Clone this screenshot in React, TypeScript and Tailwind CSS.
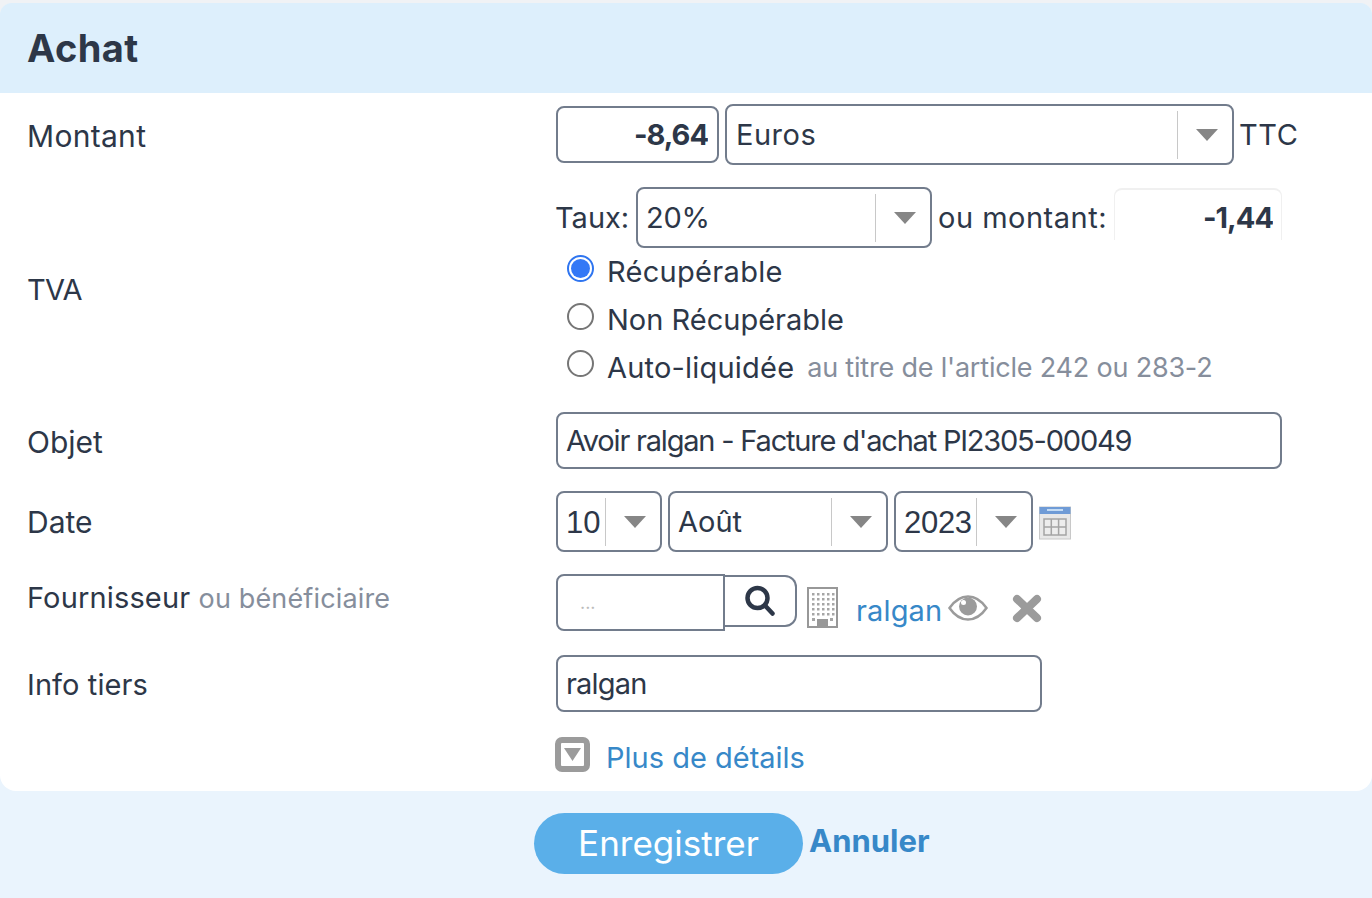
import React from 'react';

const Arrow = () => (
  <svg width="22" height="12" viewBox="0 0 22 12" className="shrink-0">
    <path d="M0 0h22L11 12z" fill="#868686" />
  </svg>
);

interface SelectProps {
  value: string;
  className: string;
  arial?: boolean;
  spanClass?: string;
}

const Select: React.FC<SelectProps> = ({ value, className, arial, spanClass }) => (
  <div className={`flex items-center border-2 border-[#727c8c] rounded-lg bg-white shrink-0 pl-[8px] ${className}`}>
    <span className={`flex-1 ${arial ? "font-['Liberation_Sans',sans-serif] text-[31px] pt-1" : ''} ${spanClass ?? ''}`}>{value}</span>
    <div className="w-[1.5px] h-[48px] bg-[#c8c8c8]" />
    <div className="flex justify-center items-center w-[54px] pl-[4px]">
      <Arrow />
    </div>
  </div>
);

const Radio = ({ checked }: { checked?: boolean }) =>
  checked ? (
    <div className="w-[27px] h-[27px] rounded-full border-2 border-[#2f75f0] bg-white flex items-center justify-center shrink-0">
      <div className="w-[19px] h-[19px] rounded-full bg-[#3478f6]" />
    </div>
  ) : (
    <div className="w-[27px] h-[27px] rounded-full border-2 border-[#767676] bg-white shrink-0" />
  );

const Calendar = () => (
  <svg width="33" height="34" viewBox="0 0 33 34" className="shrink-0">
    <rect x="0.5" y="1" width="31" height="32" fill="#e8e8e8" stroke="#c8c8c8" />
    <rect x="0.5" y="1" width="31" height="7" fill="#6f9bd6" />
    <rect x="8" y="3" width="16" height="2" fill="#c4dcf5" />
    <rect x="5" y="13" width="22" height="16" fill="#ededed" stroke="#a4a4a4" strokeWidth="1.500" />
    <path d="M12.300 13v16M19.600 13v16M5 21h22" stroke="#a4a4a4" strokeWidth="1.500" />
  </svg>
);

const Building = () => (
  <svg width="31" height="41" viewBox="0 0 31 41" className="shrink-0">
    <rect x="1" y="1" width="29" height="39" fill="#fff" stroke="#989898" strokeWidth="2" />
    {[6, 11, 16, 21, 26].map((y) =>
      [5, 10, 15, 20, 25].map((x) => <rect key={`${x}-${y}`} x={x} y={y} width="2.500" height="2.500" fill="#a6a6a6" />),
    )}
    <rect x="5" y="31" width="3" height="3" fill="#a6a6a6" />
    <rect x="23" y="31" width="3" height="3" fill="#a6a6a6" />
    <path d="M10 32h11v8H10z" fill="#989898" />
  </svg>
);

const Eye = () => (
  <svg width="40" height="28" viewBox="0 0 40 28" className="shrink-0">
    <path d="M1.500 14C7 6 13 2.500 20 2.500S33 6 38.500 14C33 22 27 25.500 20 25.500S7 22 1.500 14z" fill="none" stroke="#9b9b9b" strokeWidth="2.500" />
    <circle cx="20" cy="12.500" r="9" fill="#9b9b9b" />
    <circle cx="15.500" cy="8.500" r="2.500" fill="#fff" />
  </svg>
);

const Cross = () => (
  <svg width="30" height="29" viewBox="0 0 30 29" className="shrink-0">
    <path d="M5 5l20 19M25 5L5 24" stroke="#9b9b9b" strokeWidth="8" strokeLinecap="round" />
  </svg>
);

const Search = () => (
  <svg width="32" height="32" viewBox="0 0 32 32">
    <circle cx="13.500" cy="13" r="10" fill="none" stroke="#2d3748" strokeWidth="4.500" />
    <path d="M21 20.500l7.500 8" stroke="#2d3748" strokeWidth="4.500" strokeLinecap="round" />
  </svg>
);

const inputClass = 'border-2 border-[#727c8c] rounded-lg bg-white outline-none px-[8px] text-[#2d3748]';

export default function App() {
  return (
    <div className="w-[1372px] h-[898px] overflow-hidden bg-[#f0f2f5] pt-[3px] font-['Inter',sans-serif] text-[29px] text-[#2d3748]">
      <div className="h-[895px] bg-[#eaf4fd] rounded-t-xl flex flex-col">
        <div className="h-[90px] bg-[#ddeffc] rounded-t-xl flex items-center pl-[27px]">
          <h1 className="text-[38px] font-bold pt-px tracking-[0.4px]">Achat</h1>
        </div>

        <div className="h-[698px] bg-white rounded-b-2xl flex flex-col">
          {/* Montant */}
          <div className="flex h-[94px] pt-[11px]">
            <div className="w-[556px] pl-[27px] pt-[10px] shrink-0 text-[30px] tracking-[0.3px]">Montant</div>
            <div className="flex gap-[6px]">
              <input readOnly value="-8,64" className={`${inputClass} w-[163px] h-[57px] mt-[2px] text-right font-bold tracking-[-1px] pr-[9px]`} />
              <Select value="Euros" className="w-[509px] h-[61px]" spanClass="tracking-[0.5px] pl-px" />
              <span className="pt-[9px] -ml-px tracking-[0.6px]">TTC</span>
            </div>
          </div>

          {/* TVA */}
          <div className="flex h-[225px]">
            <div className="w-[556px] pl-[27px] pt-[81px] shrink-0 tracking-[-0.6px]">TVA</div>
            <div className="flex flex-col">
              <div className="flex items-start h-[61px]">
                <span className="pt-[9px] w-[80px] -ml-px mr-px">Taux:</span>
                <Select value="20%" className="w-[296px] h-[61px]" spanClass="tracking-[-0.3px]" />
                <span className="pt-[9px] pl-[6px] w-[182px] tracking-[0.5px]">ou montant:</span>
                <input
                  readOnly
                  value="-1,44"
                  className="w-[168px] h-[52px] mt-px pt-[4px] border-t-2 border-x border-[#f0f0f0] rounded-t-lg px-[8px] text-right font-bold outline-none tracking-[-1px]"
                />
              </div>
              <div className="flex flex-col pl-[11px] pt-[6px] gap-[12px]">
                <div className="flex items-center gap-[14px] h-[36px]">
                  <div className="mb-[8px]">
                    <Radio checked />
                  </div>
                  <span className="tracking-[0.3px] -ml-px">Récupérable</span>
                </div>
                <div className="flex items-center gap-[14px] h-[36px]">
                  <div className="mb-[8px]">
                    <Radio />
                  </div>
                  <span className="-ml-px">Non Récupérable</span>
                </div>
                <div className="flex items-center gap-[14px] h-[36px]">
                  <div className="mb-[10px]">
                    <Radio />
                  </div>
                  <span className="tracking-[0.2px] -ml-px">Auto-liquidée</span>
                  <span className="text-[#868e9c] text-[27px] tracking-[-0.2px] -ml-px">au titre de l'article 242 ou 283-2</span>
                </div>
              </div>
            </div>
          </div>

          {/* Objet */}
          <div className="flex h-[79px]">
            <div className="w-[556px] pl-[27px] pt-[8px] shrink-0 text-[30px]">Objet</div>
            <input readOnly value="Avoir ralgan - Facture d'achat PI2305-00049" className={`${inputClass} w-[726px] h-[57px] tracking-[-1.2px]`} />
          </div>

          {/* Date */}
          <div className="flex h-[83px]">
            <div className="w-[556px] pl-[27px] pt-[9px] shrink-0 text-[30px]">Date</div>
            <div className="flex gap-[6px]">
              <Select value="10" arial className="w-[106px] h-[61px]" />
              <Select value="Août" className="w-[220px] h-[61px]" />
              <Select value="2023" arial className="w-[139px] h-[61px]" spanClass="tracking-[-0.3px]" />
              <div className="pt-[15px]">
                <Calendar />
              </div>
            </div>
          </div>

          {/* Fournisseur */}
          <div className="flex h-[81px]">
            <div className="w-[556px] pl-[27px] pt-[2px] shrink-0 tracking-[0.15px]">
              Fournisseur <span className="text-[#868e9c] text-[27px] tracking-[0.15px]">ou bénéficiaire</span>
            </div>
            <div className="flex items-start">
              <input
                readOnly
                placeholder="..."
                className="w-[169px] h-[57px] border-2 border-[#727c8c] rounded-l-lg outline-none px-[22px] text-[18px] placeholder:text-[#bbbbbb]"
              />
              <div className="w-[73px] h-[52px] mt-px -ml-px border-2 border-[#727c8c] border-l-0 rounded-r-xl flex items-center justify-center">
                <Search />
              </div>
              <div className="ml-[10px] mt-[13px]">
                <Building />
              </div>
              <a className="ml-[18px] mt-[15px] text-[#3788c8] tracking-[0.15px]">ralgan</a>
              <div className="ml-[6px] mt-[20px]">
                <Eye />
              </div>
              <div className="ml-[24px] mt-[20px]">
                <Cross />
              </div>
            </div>
          </div>

          {/* Info tiers */}
          <div className="flex h-[81px]">
            <div className="w-[556px] pl-[27px] pt-[8px] shrink-0 tracking-[0.1px]">Info tiers</div>
            <input readOnly value="ralgan" className={`${inputClass} w-[486px] h-[57px] tracking-[-0.8px]`} />
          </div>

          {/* Plus de details */}
          <div className="flex pl-[555px] items-start">
            <div className="w-[35px] h-[35px] mt-px rounded-[7px] border-[6px] border-[#9b9b9b] bg-white flex items-center justify-center">
              <svg width="17" height="13" viewBox="0 0 17 13">
                <path d="M0 0h17L8.500 13z" fill="#9b9b9b" />
              </svg>
            </div>
            <a className="ml-4 text-[#3788c8]">Plus de détails</a>
          </div>
        </div>

        {/* Footer */}
        <div className="flex items-start pl-[534px] pt-[22px]">
          <button className="w-[269px] h-[61px] rounded-full bg-[#5aafe9] text-white text-[35px] flex items-center justify-center">
            Enregistrer
          </button>
          <a className="ml-[6px] mt-[5px] font-bold text-[#3788c8] text-[31px]">Annuler</a>
        </div>
      </div>
    </div>
  );
}
